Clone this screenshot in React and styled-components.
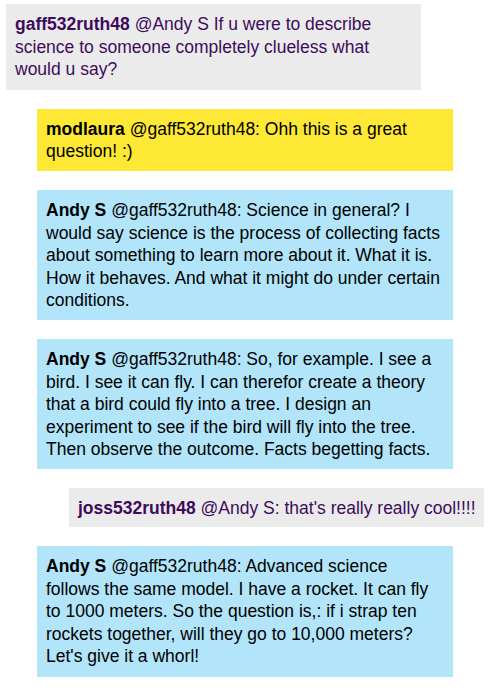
import React from 'react'
import styled, { createGlobalStyle } from 'styled-components'

const GlobalStyle = createGlobalStyle`
  body {
    margin: 0;
    background: #ffffff;
    font-family: "Liberation Sans", Arial, sans-serif;
  }
`

const palette = {
  guest: { bg: '#ebebeb', color: '#3d0b5b' },
  mod: { bg: '#fde935', color: '#000000' },
  host: { bg: '#b2e5f9', color: '#000000' },
}

const Feed = styled.div`
  display: flex;
  flex-direction: column;
  align-items: flex-start;
  gap: 19px;
  padding: 4px 0 14px;
`

const Bubble = styled.div`
  box-sizing: border-box;
  width: ${({ $width }) => $width}px;
  margin-left: ${({ $indent }) => $indent}px;
  padding: ${({ $pad }) => $pad}px ${({ $padRight }) => $padRight}px ${({ $pad }) => $pad}px 9px;
  background: ${({ $kind }) => palette[$kind].bg};
  color: ${({ $kind }) => palette[$kind].color};
  font-size: 17.5px;
  line-height: 22.4px;
`

const Author = styled.b`
  font-weight: 700;
`

const messages = [
  {
    kind: 'guest', indent: 6, width: 415, pad: 9.2, padRight: 9,
    author: 'gaff532ruth48',
    text: '@Andy S If u were to describe science to someone completely clueless what would u say?',
  },
  {
    kind: 'mod', indent: 37, width: 416, pad: 9, padRight: 9,
    author: 'modlaura',
    text: '@gaff532ruth48: Ohh this is a great question! :)',
  },
  {
    kind: 'host', indent: 37, width: 416, pad: 9, padRight: 9,
    author: 'Andy S',
    text: '@gaff532ruth48: Science in general? I would say science is the process of collecting facts about something to learn more about it. What it is. How it behaves. And what it might do under certain conditions.',
  },
  {
    kind: 'host', indent: 37, width: 416, pad: 9, padRight: 9,
    author: 'Andy S',
    text: '@gaff532ruth48: So, for example. I see a bird. I see it can fly. I can therefor create a theory that a bird could fly into a tree. I design an experiment to see if the bird will fly into the tree. Then observe the outcome. Facts begetting facts.',
  },
  {
    kind: 'guest', indent: 69, width: 415, pad: 8.3, padRight: 3,
    author: 'joss532ruth48',
    text: "@Andy S: that's really really cool!!!!",
  },
  {
    kind: 'host', indent: 37, width: 416, pad: 9, padRight: 9,
    author: 'Andy S',
    text: "@gaff532ruth48: Advanced science follows the same model. I have a rocket. It can fly to 1000 meters. So the question is,: if i strap ten rockets together, will they go to 10,000 meters? Let's give it a whorl!",
  },
]

const App = () => {
  return (
    <>
      <GlobalStyle />
      <Feed>
        {messages.map((m, i) => (
          <Bubble
            key={i}
            $kind={m.kind}
            $indent={m.indent}
            $width={m.width}
            $pad={m.pad}
            $padRight={m.padRight}
          >
            <Author>{m.author}</Author> {m.text}
          </Bubble>
        ))}
      </Feed>
    </>
  )
}

export default App
